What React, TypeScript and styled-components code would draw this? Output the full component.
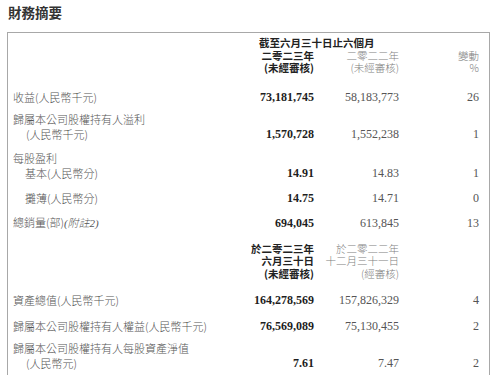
import React from "react";
import styled, { createGlobalStyle } from "styled-components";

const GlobalStyle = createGlobalStyle`
  html, body {
    margin: 0;
    padding: 0;
    background: #fff;
  }
  body {
    font-family: "Noto Sans CJK TC", "Noto Sans", sans-serif;
  }
`;

const Page = styled.div`
  width: 500px;
  height: 375px;
  overflow: hidden;
  padding: 0 0 0 7px;
  box-sizing: border-box;
`;

const Title = styled.h2`
  margin: 0;
  padding: 4px 0 0 1px;
  height: 28px;
  box-sizing: border-box;
  font-family: "Noto Sans CJK TC", sans-serif;
  font-size: 13.5px;
  line-height: 17px;
  font-weight: 700;
  color: #333;
`;

const Box = styled.div`
  width: 483px;
  box-sizing: border-box;
  border: 1px solid #a8a8a8;
  border-bottom: none;
  padding: 4px 10px 30px 5px;
  margin-top: 4px;
`;

const Row = styled.div<{ $mt?: number }>`
  display: grid;
  grid-template-columns: 1fr 70px 85px 80px;
  align-items: end;
  margin-top: ${(p) => p.$mt ?? 0}px;
`;

const Label = styled.div`
  font-family: "Noto Sans CJK TC", sans-serif;
  font-weight: 300;
  font-size: 11px;
  line-height: 15px;
  color: #555;
  white-space: nowrap;
`;

const Indent = styled.div<{ $pad?: number }>`
  padding-left: ${(p) => p.$pad ?? 12}px;
`;

const Note = styled.i`
  font-family: "Liberation Serif", "Noto Sans CJK TC", serif;
  font-style: italic;
`;

const Num = styled.div<{ $bold?: boolean }>`
  font-family: "Liberation Serif", serif;
  font-size: 12px;
  line-height: 15px;
  text-align: right;
  font-weight: ${(p) => (p.$bold ? 700 : 400)};
  color: ${(p) => (p.$bold ? "#1e1e1e" : "#555")};
  white-space: nowrap;
`;

const Head = styled.div<{ $bold?: boolean; $span?: boolean }>`
  font-family: "Noto Sans CJK TC", sans-serif;
  font-size: 10.5px;
  line-height: 12.5px;
  text-align: right;
  white-space: nowrap;
  font-weight: ${(p) => (p.$bold ? 700 : 300)};
  color: ${(p) => (p.$bold ? "#222" : "#808080")};
  ${(p) =>
    p.$span &&
    `
    grid-column: 2 / 4;
    text-align: left;
    padding-left: 15px;
  `}
`;

type Line = {
  label: React.ReactNode;
  a: string;
  b: string;
  c: string;
  mt: number;
};

const topRows: Line[] = [
  { label: "收益(人民幣千元)", a: "73,181,745", b: "58,183,773", c: "26", mt: 15 },
  {
    label: (
      <>
        歸屬本公司股權持有人溢利
        <Indent $pad={13}>(人民幣千元)</Indent>
      </>
    ),
    a: "1,570,728",
    b: "1,552,238",
    c: "1",
    mt: 7,
  },
  {
    label: (
      <>
        每股盈利
        <Indent>基本(人民幣分)</Indent>
      </>
    ),
    a: "14.91",
    b: "14.83",
    c: "1",
    mt: 9,
  },
  { label: <Indent>攤薄(人民幣分)</Indent>, a: "14.75", b: "14.71", c: "0", mt: 10 },
  {
    label: (
      <>
        總銷量(部)<Note>(附註2)</Note>
      </>
    ),
    a: "694,045",
    b: "613,845",
    c: "13",
    mt: 9,
  },
];

const bottomRows: Line[] = [
  { label: "資產總值(人民幣千元)", a: "164,278,569", b: "157,826,329", c: "4", mt: 12.5 },
  {
    label: "歸屬本公司股權持有人權益(人民幣千元)",
    a: "76,569,089",
    b: "75,130,455",
    c: "2",
    mt: 11,
  },
  {
    label: (
      <>
        歸屬本公司股權持有人每股資產淨值
        <Indent $pad={13}>(人民幣元)</Indent>
      </>
    ),
    a: "7.61",
    b: "7.47",
    c: "2",
    mt: 7,
  },
];

const DataRow = ({ row }: { row: Line }) => (
  <Row $mt={row.mt}>
    <Label>{row.label}</Label>
    <Num $bold>{row.a}</Num>
    <Num>{row.b}</Num>
    <Num>{row.c}</Num>
  </Row>
);

export default function App() {
  return (
    <Page>
      <GlobalStyle />
      <Title>財務摘要</Title>
      <Box>
        <Row>
          <div />
          <Head $bold $span>
            截至六月三十日止六個月
          </Head>
        </Row>
        <Row>
          <div />
          <Head $bold>
            二零二三年
            <br />
            (未經審核)
          </Head>
          <Head>
            二零二二年
            <br />
            (未經審核)
          </Head>
          <Head>
            變動
            <br />%
          </Head>
        </Row>
        {topRows.map((r, i) => (
          <DataRow key={i} row={r} />
        ))}
        <Row $mt={12}>
          <div />
          <Head $bold>
            於二零二三年
            <br />
            六月三十日
            <br />
            (未經審核)
          </Head>
          <Head>
            於二零二二年
            <br />
            十二月三十一日
            <br />
            (經審核)
          </Head>
          <div />
        </Row>
        {bottomRows.map((r, i) => (
          <DataRow key={i} row={r} />
        ))}
      </Box>
    </Page>
  );
}
